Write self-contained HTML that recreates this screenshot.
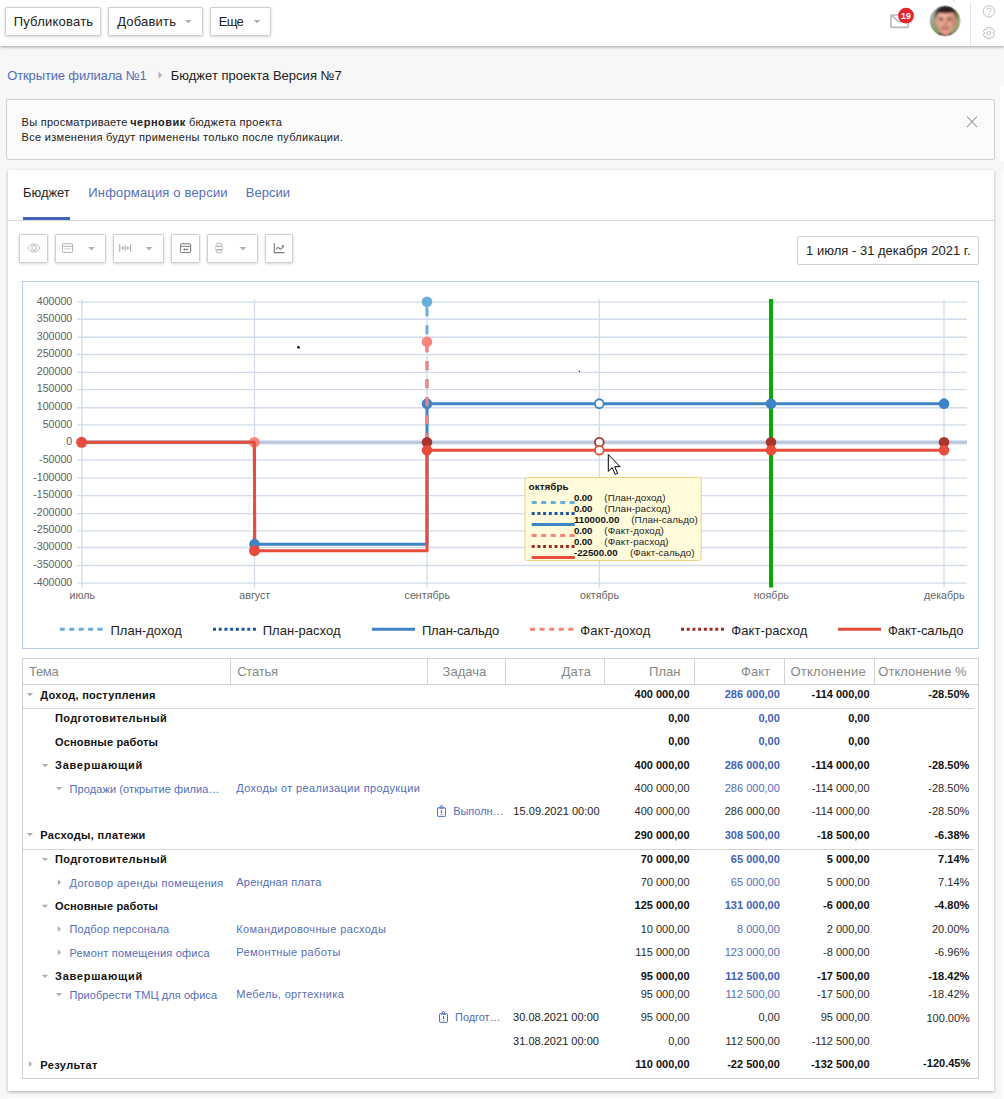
<!DOCTYPE html>
<html lang="ru"><head><meta charset="utf-8"><title>Бюджет проекта Версия №7</title>
<style>

html,body{margin:0;padding:0}
body{width:1004px;height:1099px;position:relative;overflow:hidden;background:#f7f7f7;font-family:"Liberation Sans",Arial,sans-serif;color:#222}
.a{position:absolute;box-sizing:border-box}
.t{position:absolute;white-space:nowrap;line-height:1em;display:block}
.btn{position:absolute;box-sizing:border-box;background:#fff;border:1px solid #cfcfcf;border-radius:1.5px;box-shadow:0 1px 3px rgba(0,0,0,.17)}
.hl{position:absolute;height:1px;background:#d4d4d4}
.vl{position:absolute;width:1px;background:#d4d4d4}
svg{position:absolute;overflow:visible}

</style></head><body>
<div class="a" style="left:0;top:0;width:1004px;height:46px;background:#fff;box-shadow:0 1px 3px rgba(0,0,0,.36)"></div>
<div class="btn" style="left:5px;top:7px;width:96px;height:29px"></div>
<div class="btn" style="left:108px;top:7px;width:95px;height:29px"></div>
<div class="btn" style="left:210px;top:7px;width:61px;height:29px"></div>
<div class="a" style="left:970px;top:2px;width:1px;height:44px;background:#e4e4e4"></div>
<div class="a" style="left:953px;top:0;width:1px;height:2px;background:#ddd"></div>
<div class="a" style="left:6px;top:99px;width:989px;height:61px;background:#fbfbfb;border:1px solid #d0d0d0;border-radius:2px"></div>
<div class="a" style="left:8px;top:170px;width:986px;height:921px;background:#fff;box-shadow:0 1px 3px rgba(0,0,0,.3)"></div>
<div class="a" style="left:1000px;top:86px;width:4px;height:74.5px;background:#fff"></div>
<div class="a" style="left:1001.8px;top:169px;width:2.2px;height:930px;background:#fdfdfd"></div>
<div class="a" style="left:8px;top:1097.6px;width:986px;height:2px;background:#fff"></div>
<div class="hl" style="left:8px;top:220px;width:986px;background:#d9d9d9"></div>
<div class="a" style="left:23px;top:217px;width:47px;height:3px;background:#3f63b5"></div>
<div class="btn" style="left:19px;top:234px;width:29px;height:29px"></div>
<div class="btn" style="left:55px;top:234px;width:51px;height:29px"></div>
<div class="btn" style="left:113px;top:234px;width:51px;height:29px"></div>
<div class="btn" style="left:171px;top:234px;width:29px;height:29px"></div>
<div class="btn" style="left:207px;top:234px;width:51px;height:29px"></div>
<div class="btn" style="left:265px;top:234px;width:28px;height:29px"></div>
<div class="a" style="left:797px;top:236px;width:182px;height:29px;background:#fff;border:1px solid #cfcfcf;border-radius:2px"></div>
<div class="a" style="left:22px;top:281px;width:957px;height:368px;background:#fff;border:1px solid #bdcde6"></div>
<div class="a" style="left:22px;top:658px;width:957px;height:421px;background:#fff;border:1px solid #d0d0d0"></div>
<div class="hl" style="left:22px;top:684px;width:957px;background:#d0d0d0"></div>
<div class="vl" style="left:230px;top:659px;height:25px"></div>
<div class="vl" style="left:427px;top:659px;height:25px"></div>
<div class="vl" style="left:505px;top:659px;height:25px"></div>
<div class="vl" style="left:604px;top:659px;height:25px"></div>
<div class="vl" style="left:694px;top:659px;height:25px"></div>
<div class="vl" style="left:784px;top:659px;height:25px"></div>
<div class="vl" style="left:874px;top:659px;height:25px"></div>
<div class="hl" style="left:23px;top:708px;width:951px"></div>
<div class="hl" style="left:23px;top:849px;width:951px"></div>
<svg width="1004" height="1099" viewBox="0 0 1004 1099" style="left:0;top:0" font-family="Liberation Sans,Arial,sans-serif">
<path d="M77 302.20H967" stroke="#d2dcec" stroke-width="1.300"/>
<text x="72.300" y="305" font-size="10.670" fill="#606060" text-anchor="end">400000</text>
<path d="M77 319.25H967" stroke="#d2dcec" stroke-width="1.300"/>
<text x="72.300" y="322" font-size="10.670" fill="#606060" text-anchor="end">350000</text>
<path d="M77 337.25H967" stroke="#d2dcec" stroke-width="1.300"/>
<text x="72.300" y="340" font-size="10.670" fill="#606060" text-anchor="end">300000</text>
<path d="M77 354.50H967" stroke="#d2dcec" stroke-width="1.300"/>
<text x="72.300" y="357" font-size="10.670" fill="#606060" text-anchor="end">250000</text>
<path d="M77 372.45H967" stroke="#d2dcec" stroke-width="1.300"/>
<text x="72.300" y="375" font-size="10.670" fill="#606060" text-anchor="end">200000</text>
<path d="M77 389.60H967" stroke="#d2dcec" stroke-width="1.300"/>
<text x="72.300" y="392" font-size="10.670" fill="#606060" text-anchor="end">150000</text>
<path d="M77 407.75H967" stroke="#d2dcec" stroke-width="1.300"/>
<text x="72.300" y="410" font-size="10.670" fill="#606060" text-anchor="end">100000</text>
<path d="M77 424.95H967" stroke="#d2dcec" stroke-width="1.300"/>
<text x="72.300" y="428" font-size="10.670" fill="#606060" text-anchor="end">50000</text>
<path d="M77 442.30H967" stroke="#d2dcec" stroke-width="1.300"/>
<text x="72.300" y="445" font-size="10.670" fill="#606060" text-anchor="end">0</text>
<path d="M77 460.10H967" stroke="#d2dcec" stroke-width="1.300"/>
<text x="72.300" y="463" font-size="10.670" fill="#606060" text-anchor="end">-50000</text>
<path d="M77 478.20H967" stroke="#d2dcec" stroke-width="1.300"/>
<text x="72.300" y="481" font-size="10.670" fill="#606060" text-anchor="end">-100000</text>
<path d="M77 495.60H967" stroke="#d2dcec" stroke-width="1.300"/>
<text x="72.300" y="498" font-size="10.670" fill="#606060" text-anchor="end">-150000</text>
<path d="M77 513.60H967" stroke="#d2dcec" stroke-width="1.300"/>
<text x="72.300" y="516" font-size="10.670" fill="#606060" text-anchor="end">-200000</text>
<path d="M77 530.90H967" stroke="#d2dcec" stroke-width="1.300"/>
<text x="72.300" y="533" font-size="10.670" fill="#606060" text-anchor="end">-250000</text>
<path d="M77 547.50H967" stroke="#d2dcec" stroke-width="1.300"/>
<text x="72.300" y="550" font-size="10.670" fill="#606060" text-anchor="end">-300000</text>
<path d="M77 565.50H967" stroke="#d2dcec" stroke-width="1.300"/>
<text x="72.300" y="568" font-size="10.670" fill="#606060" text-anchor="end">-350000</text>
<path d="M77 583.10H967" stroke="#d2dcec" stroke-width="1.300"/>
<text x="72.300" y="586" font-size="10.670" fill="#606060" text-anchor="end">-400000</text>
<path d="M82 299.300V587.500" stroke="#d2dcec" stroke-width="1.300"/>
<path d="M254.5 299.300V587.500" stroke="#d2dcec" stroke-width="1.300"/>
<path d="M427 299.300V587.500" stroke="#d2dcec" stroke-width="1.300"/>
<path d="M599.3 299.300V587.500" stroke="#d2dcec" stroke-width="1.300"/>
<path d="M771 299.300V587.500" stroke="#d2dcec" stroke-width="1.300"/>
<path d="M944 299.300V587.500" stroke="#d2dcec" stroke-width="1.300"/>
<path d="M77 442.3H967" stroke="#bccadf" stroke-width="3.800"/>
<text x="82.3" y="598.800" font-size="10.670" fill="#666" text-anchor="middle">июль</text>
<text x="254.8" y="598.800" font-size="10.670" fill="#666" text-anchor="middle">август</text>
<text x="427.3" y="598.800" font-size="10.670" fill="#666" text-anchor="middle">сентябрь</text>
<text x="599.5999999999999" y="598.800" font-size="10.670" fill="#666" text-anchor="middle">октябрь</text>
<text x="771.3" y="598.800" font-size="10.670" fill="#666" text-anchor="middle">ноябрь</text>
<text x="944.3" y="598.800" font-size="10.670" fill="#666" text-anchor="middle">декабрь</text>
<path d="M427 442.3V301.82" stroke="#6aaedc" stroke-width="3" stroke-dasharray="9 9" fill="none"/>
<path d="M82 442.3H254.400L254.600 544.15H427V403.67H944" stroke="#3d85c6" stroke-width="3" fill="none" stroke-linejoin="round"/>
<path d="M427 442.3V341.86" stroke="#fa8379" stroke-width="3" stroke-dasharray="9 9" fill="none"/>
<circle cx="254.400" cy="442.3" r="5.400" fill="#f8857b"/>
<path d="M82 442.3H254.300L254.800 550.65H427V450.20H944" stroke="#e74c3c" stroke-width="3" fill="none" stroke-linejoin="round"/>
<path d="M771 299V587.500" stroke="#06ab06" stroke-width="4"/>
<circle cx="427" cy="301.82" r="5.3" fill="#6aaedc"/>
<circle cx="254.5" cy="544.15" r="5.3" fill="#3d85c6"/>
<circle cx="427" cy="403.67" r="5.3" fill="#3d85c6"/>
<path d="M427 406.300V397.300" stroke="#fa8379" stroke-width="3" fill="none"/>
<circle cx="599.3" cy="403.67" r="4.400" fill="#fff" stroke="#3d85c6" stroke-width="1.800"/>
<circle cx="771" cy="403.67" r="5.3" fill="#3d85c6"/>
<circle cx="944" cy="403.67" r="5.3" fill="#3d85c6"/>
<circle cx="427" cy="341.86" r="5.3" fill="#fb867c"/>
<circle cx="427" cy="442.30" r="5.3" fill="#a9352d"/>
<circle cx="771" cy="442.30" r="5.3" fill="#a9352d"/>
<circle cx="944" cy="442.30" r="5.3" fill="#a9352d"/>
<circle cx="599.3" cy="442.30" r="4.400" fill="#fff" stroke="#a9352d" stroke-width="1.800"/>
<circle cx="81.6" cy="442.30" r="5.5" fill="#e74c3c"/>
<circle cx="254.5" cy="550.65" r="5.5" fill="#e74c3c"/>
<circle cx="427" cy="450.20" r="5.3" fill="#e74c3c"/>
<circle cx="771" cy="450.20" r="5.3" fill="#e74c3c"/>
<circle cx="944" cy="450.20" r="5.3" fill="#e74c3c"/>
<circle cx="599.3" cy="450.20" r="4.400" fill="#fff" stroke="#e74c3c" stroke-width="1.800"/>
<ellipse cx="298.500" cy="347.300" rx="1.600" ry="1.200" fill="#111" transform="rotate(35 298.500 347.300)"/>
<circle cx="579.300" cy="371.300" r=".7" fill="#222"/>
<path d="M59.800 629.3H103" stroke="#6aaedc" stroke-width="3" stroke-dasharray="5 4.450"/>
<path d="M213 629.3H256" stroke="#1d55a5" stroke-width="3" stroke-dasharray="3 2.710"/>
<path d="M372 629.3H415" stroke="#3d85c6" stroke-width="3"/>
<path d="M530 629.3H573.500" stroke="#fa8379" stroke-width="3" stroke-dasharray="5 4.600"/>
<path d="M681 629.3H724" stroke="#a02c25" stroke-width="3" stroke-dasharray="3 2.710"/>
<path d="M838 629.3H881" stroke="#e74c3c" stroke-width="3"/>
<rect x="525" y="477.500" width="176.200" height="83" rx="2.500" fill="#fffbdb" stroke="#f6cf7c" stroke-width="1"/>
<text x="528.600" y="490" font-size="9.900" font-weight="700" fill="#111" textLength="40" lengthAdjust="spacing">октябрь</text>
<path d="M531.700 502.40H574.800" stroke="#6aaedc" stroke-width="3" stroke-dasharray="5 4.500"/>
<text x="573.900" y="500.70" font-size="9.700" font-weight="700" fill="#111" textLength="18.5" lengthAdjust="spacing">0.00</text>
<text x="604.3000000000001" y="500.70" font-size="9.800" fill="#222" textLength="61.1" lengthAdjust="spacing">(План-доход)</text>
<path d="M531.700 513.42H574.800" stroke="#1d55a5" stroke-width="3" stroke-dasharray="3 2.700"/>
<text x="573.900" y="511.70" font-size="9.700" font-weight="700" fill="#111" textLength="18.5" lengthAdjust="spacing">0.00</text>
<text x="604.3000000000001" y="511.70" font-size="9.800" fill="#222" textLength="66.1" lengthAdjust="spacing">(План-расход)</text>
<path d="M531.700 524.44H574.800" stroke="#3d85c6" stroke-width="3"/>
<text x="573.900" y="522.70" font-size="9.700" font-weight="700" fill="#111" textLength="45.4" lengthAdjust="spacing">110000.00</text>
<text x="631.2" y="522.70" font-size="9.800" fill="#222" textLength="66.6" lengthAdjust="spacing">(План-сальдо)</text>
<path d="M531.700 535.46H574.800" stroke="#fa8379" stroke-width="3" stroke-dasharray="5 4.500"/>
<text x="573.900" y="533.70" font-size="9.700" font-weight="700" fill="#111" textLength="18.5" lengthAdjust="spacing">0.00</text>
<text x="604.3000000000001" y="533.70" font-size="9.800" fill="#222" textLength="59.4" lengthAdjust="spacing">(Факт-доход)</text>
<path d="M531.700 546.48H574.800" stroke="#a02c25" stroke-width="3" stroke-dasharray="3 2.700"/>
<text x="573.900" y="544.70" font-size="9.700" font-weight="700" fill="#111" textLength="18.5" lengthAdjust="spacing">0.00</text>
<text x="604.3000000000001" y="544.70" font-size="9.800" fill="#222" textLength="64.3" lengthAdjust="spacing">(Факт-расход)</text>
<path d="M531.700 557.50H574.800" stroke="#e74c3c" stroke-width="3"/>
<text x="573.900" y="555.70" font-size="9.700" font-weight="700" fill="#111" textLength="43.7" lengthAdjust="spacing">-22500.00</text>
<text x="629.9000000000001" y="555.70" font-size="9.800" fill="#222" textLength="64.6" lengthAdjust="spacing">(Факт-сальдо)</text>
<path d="M608.300 454.500v16.800l3.900-3.700 2.900 6.800 2.500-1.100-2.900-6.600h5.400z" fill="#fff" stroke="#000" stroke-width="1" stroke-linejoin="miter"/>
</svg>
<svg width="1004" height="1099" viewBox="0 0 1004 1099" style="left:0;top:0">
<path d="M185.0 19.9h6.4l-3.2 3.4z" fill="#aaa"/>
<path d="M253.8 19.9h6.4l-3.2 3.4z" fill="#aaa"/>
<path d="M158.5 71.8v7l3.6 -3.5z" fill="#b0b0b0"/>
<g fill="none" stroke="#b9b9b9" stroke-width="1.6" stroke-linejoin="round"><rect x="890.8" y="15" width="17.4" height="12.4" rx="0.8"/><path d="M891 15.4l8.5 6.4 8.5-6.4"/></g>
<circle cx="906" cy="15.6" r="7.9" fill="#e3262f"/>
<text x="906" y="18.700" font-size="8.800" font-weight="700" fill="#fff" text-anchor="middle" font-family="Liberation Sans,Arial,sans-serif">19</text>
<circle cx="988.900" cy="11.400" r="5.700" fill="none" stroke="#c2c2c2" stroke-width="1"/>
<path d="M987.2 9.9a1.9 1.9 0 1 1 2.6 1.8c-.6.3-.8.7-.8 1.4" fill="none" stroke="#bdbdbd" stroke-width="1"/><circle cx="989" cy="14.6" r=".6" fill="#bdbdbd"/>
<polygon points="987.19,29.26 987.18,27.46 990.62,27.46 990.61,29.26 991.37,29.70 992.92,28.79 994.65,31.77 993.08,32.66 993.08,33.54 994.65,34.43 992.92,37.41 991.37,36.50 990.61,36.94 990.62,38.74 987.18,38.74 987.19,36.94 986.43,36.50 984.88,37.41 983.15,34.43 984.72,33.54 984.72,32.66 983.15,31.77 984.88,28.79 986.43,29.70" fill="none" stroke="#c2c2c2" stroke-width="1" stroke-linejoin="round"/><circle cx="988.900" cy="33.100" r="1.900" fill="none" stroke="#c2c2c2" stroke-width="1"/>
<path d="M967 116.5l10 10.5M977 116.5l-10 10.5" stroke="#a9a9a9" stroke-width="1.1" fill="none"/>
<g fill="none" stroke="#b4b4b4" stroke-width="1"><path d="M28 248c1.6-2.6 3.6-4 6-4s4.400 1.400 6 4c-1.600 2.600-3.600 4-6 4s-4.400-1.400-6-4z"/><circle cx="34" cy="248" r="2.300"/></g>
<g fill="none" stroke="#b4b4b4" stroke-width="1"><rect x="62.5" y="243.700" width="10" height="8.800" rx=".8"/><path d="M62.500 246.300h10"/><path d="M64.700 248.800h1.400M66.900 248.800h1.400M69.100 248.800h1.400"/></g>
<path d="M88.1 247.0h6.8l-3.4 3.6z" fill="#b4b4b4"/>
<g fill="none" stroke="#b4b4b4" stroke-width="1"><path d="M119.600 244v8M130.600 244v8M122.400 246.200v3.800M125.100 245.400v5.400M127.800 246.200v3.800M119.600 248h11"/></g>
<path d="M145.6 247.0h6.8l-3.4 3.6z" fill="#b4b4b4"/>
<g fill="none" stroke="#7c7c7c" stroke-width="1"><rect x="180.500" y="243.800" width="10.200" height="8.800" rx=".8"/><path d="M180.500 246.300h10.200M183 242.900v1M188.200 242.900v1"/><path d="M184.900 248.300l-1.300 1.200 1.300 1.200M186.500 248.300l1.300 1.200-1.300 1.200M183.600 249.500h4.200" stroke-width=".9"/></g>
<g fill="none" stroke="#b4b4b4" stroke-width="1"><rect x="216.200" y="243.400" width="5.600" height="2.700" rx="1"/><rect x="215.500" y="246.600" width="7" height="3" rx="1"/><rect x="216.200" y="250.100" width="5.600" height="2.700" rx="1"/><path d="M217.200 246.100v.5M220.800 246.100v.5M217.200 249.600v.5M220.800 249.600v.5"/></g>
<path d="M239.6 247.0h6.8l-3.4 3.6z" fill="#b4b4b4"/>
<g fill="none" stroke="#7c7c7c" stroke-width="1.1"><path d="M274.300 243v9.600h10.200"/><path d="M276.200 249.600c1.300-2.600 2.300-2.600 3.300-1.200s2 1 3.700-2.400"/><path d="M281.700 245.600h1.800v1.800" stroke-width=".9"/></g>
<path d="M26.9 693.0h6.2l-3.1 3.2z" fill="#adadad"/>
<path d="M41.9 764.0h6.2l-3.1 3.2z" fill="#adadad"/>
<path d="M55.9 787.0h6.2l-3.1 3.2z" fill="#adadad"/>
<path d="M26.9 833.0h6.2l-3.1 3.2z" fill="#adadad"/>
<path d="M41.9 857.9h6.2l-3.1 3.2z" fill="#adadad"/>
<path d="M41.9 904.8h6.2l-3.1 3.2z" fill="#adadad"/>
<path d="M41.9 974.7h6.2l-3.1 3.2z" fill="#adadad"/>
<path d="M55.9 993.1h6.2l-3.1 3.2z" fill="#adadad"/>
<path d="M57.9 879.3v6l3.2 -3.0z" fill="#adadad"/>
<path d="M57.9 926.0v6l3.2 -3.0z" fill="#adadad"/>
<path d="M57.9 949.2v6l3.2 -3.0z" fill="#adadad"/>
<path d="M29.0 1061.0v6l3.2 -3.0z" fill="#adadad"/>
<g fill="none" stroke="#4a6abb" stroke-width="1"><rect x="437.55" y="807.75" width="7.900" height="8.600" rx=".6"/><path d="M440.30 807.70v-1a1.200 1.200 0 0 1 2.400 0v1" /><path d="M439.20 808.50h4.600" stroke-width=".9" opacity=".7"/><path d="M441.50 810.00v3.100M441.50 814.20v.9" stroke-width="1.150"/></g>
<g fill="none" stroke="#4a6abb" stroke-width="1"><rect x="439.55" y="1013.75" width="7.900" height="8.600" rx=".6"/><path d="M442.30 1013.70v-1a1.200 1.200 0 0 1 2.400 0v1" /><path d="M441.20 1014.50h4.600" stroke-width=".9" opacity=".7"/><path d="M443.50 1016.00v3.100M443.50 1020.20v.9" stroke-width="1.150"/></g>
</svg>
<svg width="32" height="32" viewBox="0 0 32 32" style="left:929px;top:5px">
<defs><clipPath id="avc"><circle cx="16" cy="15.900" r="15.300"/></clipPath>
<filter id="avb" x="-20%" y="-20%" width="140%" height="140%"><feGaussianBlur stdDeviation="1.050"/></filter>
<linearGradient id="avbg" x1="0" y1="0" x2="0.250" y2="1"><stop offset="0" stop-color="#bcc0c6"/><stop offset=".4" stop-color="#a9aa9c"/><stop offset=".75" stop-color="#8d9a6c"/><stop offset="1" stop-color="#7b9556"/></linearGradient></defs>
<g clip-path="url(#avc)"><rect width="32" height="32" fill="url(#avbg)"/>
<g filter="url(#avb)">
<rect x="23" y="4" width="10" height="28" fill="#8e9a62"/>
<rect x="26" y="14" width="6" height="10" fill="#a3a574"/>
<path d="M7 32c1-3 4-4.500 9.500-4.500s8 1.500 9 4.500z" fill="#3b3231"/>
<rect x="12.500" y="24" width="8" height="6" fill="#c98672"/>
<ellipse cx="7.400" cy="17.200" rx="1.300" ry="2.200" fill="#d6907c"/><ellipse cx="26.300" cy="17.400" rx="1.200" ry="2.200" fill="#b8745f"/>
<path d="M7.600 12.500c0-5 3.500-7.500 9-7.500s9.600 2.500 9.600 7.500c0 4.500-.6 8-2.400 11.500-1.600 3.200-4.400 5.400-7.200 5.400s-5.200-2.200-6.800-5.400c-1.700-3.500-2.200-7-2.200-11.500z" fill="#e6a18b"/>
<ellipse cx="14.800" cy="10.300" rx="4.600" ry="2.600" fill="#f1b39d"/>
<path d="M22.500 9c2.500 2.500 3.600 7 1.600 14-1 .6-1.800-7-1.600-14z" fill="#bd7865" opacity=".8"/>
<path d="M6.500 15.500c-1.600-9.500 3-14.800 10.300-14.800s12.400 5.300 10.300 14.900c-.4-3.600-1.300-6.600-3.300-8-3.700 1-9.800 1-13.600-.2-2.100 1.500-3.200 4.300-3.700 8.100z" fill="#2a2321"/>
<path d="M9.700 13.300c1.400-.8 3.200-.8 4.600-.2M18 13.100c1.500-.6 3.200-.5 4.500.3" stroke="#4a2e26" stroke-width=".9" fill="none"/>
<ellipse cx="12" cy="14.900" rx="1.700" ry=".8" fill="#3f261f"/><ellipse cx="20" cy="14.900" rx="1.700" ry=".8" fill="#3f261f"/>
<path d="M16.800 16.500c.5 1.600 1 2.800.4 3.800-.8.400-1.800.3-2.400-.1" fill="none" stroke="#a8624f" stroke-width="1.100"/>
<path d="M11.800 22.300c2.600 1 6.200 1 8.900-.1-1 3.200-7.600 3.300-8.900.1z" fill="#e9c9c0" stroke="#8d4a45" stroke-width=".9"/>
</g></g>
<circle cx="16" cy="15.900" r="15.300" fill="none" stroke="#e9eaee" stroke-width=".6"/></svg>
<span class="t" style="left:13.70px;top:15.00px;font-size:13px;letter-spacing:0.220px;">Публиковать</span>
<span class="t" style="left:117.20px;top:15.00px;font-size:13px;letter-spacing:0.192px;">Добавить</span>
<span class="t" style="left:218.70px;top:15.00px;font-size:13px;letter-spacing:-0.727px;">Еще</span>
<span class="t" style="left:7.30px;top:69.00px;font-size:13px;color:#546eb8;letter-spacing:-0.146px;">Открытие филиала №1</span>
<span class="t" style="left:170.70px;top:69.00px;font-size:13px;letter-spacing:0.023px;">Бюджет проекта Версия №7</span>
<span class="t" style="left:21.60px;top:117.00px;font-size:11px;letter-spacing:0.278px;">Вы просматриваете</span>
<span class="t" style="left:130.20px;top:117.00px;font-size:11px;font-weight:700;letter-spacing:0.496px;">черновик</span>
<span class="t" style="left:188.90px;top:117.00px;font-size:11px;letter-spacing:0.334px;">бюджета проекта</span>
<span class="t" style="left:21.60px;top:132.00px;font-size:11px;letter-spacing:0.294px;">Все изменения будут применены только после публикации.</span>
<span class="t" style="left:23.00px;top:186.00px;font-size:13px;letter-spacing:-0.046px;">Бюджет</span>
<span class="t" style="left:88.30px;top:186.00px;font-size:13px;color:#546eb8;letter-spacing:0.167px;">Информация о версии</span>
<span class="t" style="left:245.70px;top:186.00px;font-size:13px;color:#546eb8;letter-spacing:0.029px;">Версии</span>
<span class="t" style="left:806.10px;top:244.00px;font-size:13px;letter-spacing:0.007px;">1 июля - 31 декабря 2021 г.</span>
<span class="t" style="left:110.50px;top:624.00px;font-size:13px;letter-spacing:0.007px;">План-доход</span>
<span class="t" style="left:262.70px;top:624.00px;font-size:13px;letter-spacing:0.028px;">План-расход</span>
<span class="t" style="left:421.90px;top:624.00px;font-size:13px;letter-spacing:-0.118px;">План-сальдо</span>
<span class="t" style="left:580.30px;top:624.00px;font-size:13px;letter-spacing:0.134px;">Факт-доход</span>
<span class="t" style="left:731.20px;top:624.00px;font-size:13px;letter-spacing:0.102px;">Факт-расход</span>
<span class="t" style="left:888.00px;top:624.00px;font-size:13px;letter-spacing:-0.064px;">Факт-сальдо</span>
<span class="t" style="left:29.00px;top:665.00px;font-size:13px;color:#888;letter-spacing:-0.303px;">Тема</span>
<span class="t" style="left:237.20px;top:665.00px;font-size:13px;color:#888;letter-spacing:-0.204px;">Статья</span>
<span class="t" style="left:442.60px;top:665.00px;font-size:13px;color:#888;letter-spacing:0.015px;">Задача</span>
<span class="t" style="left:561.60px;top:665.00px;font-size:13px;color:#888;letter-spacing:0.168px;">Дата</span>
<span class="t" style="left:649.00px;top:665.00px;font-size:13px;color:#888;letter-spacing:0.052px;">План</span>
<span class="t" style="left:741.10px;top:665.00px;font-size:13px;color:#888;letter-spacing:0.031px;">Факт</span>
<span class="t" style="left:790.40px;top:665.00px;font-size:13px;color:#888;letter-spacing:0.272px;">Отклонение</span>
<span class="t" style="left:878.30px;top:665.00px;font-size:13px;color:#888;letter-spacing:0.016px;">Отклонение %</span>
<span class="t" style="left:40.30px;top:690.00px;font-size:11px;font-weight:700;color:#111;letter-spacing:0.277px;">Доход, поступления</span>
<span class="t" style="left:55.00px;top:713.00px;font-size:11px;font-weight:700;color:#111;letter-spacing:0.387px;">Подготовительный</span>
<span class="t" style="left:55.00px;top:737.00px;font-size:11px;font-weight:700;color:#111;letter-spacing:0.152px;">Основные работы</span>
<span class="t" style="left:55.00px;top:760.00px;font-size:11px;font-weight:700;color:#111;letter-spacing:0.735px;">Завершающий</span>
<span class="t" style="left:69.50px;top:784.00px;font-size:11px;color:#546eb8;letter-spacing:0.103px;">Продажи (открытие филиа…</span>
<span class="t" style="left:40.30px;top:830.00px;font-size:11px;font-weight:700;color:#111;letter-spacing:0.343px;">Расходы, платежи</span>
<span class="t" style="left:55.00px;top:854.00px;font-size:11px;font-weight:700;color:#111;letter-spacing:0.387px;">Подготовительный</span>
<span class="t" style="left:69.50px;top:878.00px;font-size:11px;color:#546eb8;letter-spacing:0.366px;">Договор аренды помещения</span>
<span class="t" style="left:55.00px;top:901.00px;font-size:11px;font-weight:700;color:#111;letter-spacing:0.152px;">Основные работы</span>
<span class="t" style="left:69.50px;top:924.00px;font-size:11px;color:#546eb8;letter-spacing:0.215px;">Подбор персонала</span>
<span class="t" style="left:69.50px;top:948.00px;font-size:11px;color:#546eb8;letter-spacing:0.201px;">Ремонт помещения офиса</span>
<span class="t" style="left:55.00px;top:971.00px;font-size:11px;font-weight:700;color:#111;letter-spacing:0.735px;">Завершающий</span>
<span class="t" style="left:69.50px;top:990.00px;font-size:11px;color:#546eb8;letter-spacing:0.047px;">Приобрести ТМЦ для офиса</span>
<span class="t" style="left:40.30px;top:1060.00px;font-size:11px;font-weight:700;color:#111;letter-spacing:0.396px;">Результат</span>
<span class="t" style="left:236.30px;top:783.00px;font-size:11px;color:#546eb8;letter-spacing:0.356px;">Доходы от реализации продукции</span>
<span class="t" style="left:236.30px;top:877.00px;font-size:11px;color:#546eb8;letter-spacing:0.188px;">Арендная плата</span>
<span class="t" style="left:236.30px;top:924.00px;font-size:11px;color:#546eb8;letter-spacing:0.392px;">Командировочные расходы</span>
<span class="t" style="left:236.30px;top:947.00px;font-size:11px;color:#546eb8;letter-spacing:0.381px;">Ремонтные работы</span>
<span class="t" style="left:236.30px;top:989.00px;font-size:11px;color:#546eb8;letter-spacing:0.358px;">Мебель, оргтехника</span>
<span class="t" style="left:453.20px;top:806.00px;font-size:11px;color:#546eb8;letter-spacing:-0.030px;">Выполн…</span>
<span class="t" style="left:513.30px;top:806.00px;font-size:11px;letter-spacing:0.044px;">15.09.2021 00:00</span>
<span class="t" style="left:455.10px;top:1012.00px;font-size:11px;color:#546eb8;letter-spacing:-0.082px;">Подгот…</span>
<span class="t" style="left:513.10px;top:1012.00px;font-size:11px;letter-spacing:0.011px;">30.08.2021 00:00</span>
<span class="t" style="left:513.10px;top:1036.00px;font-size:11px;letter-spacing:0.011px;">31.08.2021 00:00</span>
<span class="t" style="left:634.54px;top:689.00px;font-size:11px;font-weight:700;color:#111;">400 000,00</span>
<span class="t" style="left:724.74px;top:689.00px;font-size:11px;font-weight:700;color:#3f63b8;">286 000,00</span>
<span class="t" style="left:811.47px;top:689.00px;font-size:11px;font-weight:700;color:#111;">-114 000,00</span>
<span class="t" style="left:928.32px;top:689.00px;font-size:11px;font-weight:700;color:#111;">-28.50%</span>
<span class="t" style="left:668.18px;top:713.00px;font-size:11px;font-weight:700;color:#111;">0,00</span>
<span class="t" style="left:758.38px;top:713.00px;font-size:11px;font-weight:700;color:#3f63b8;">0,00</span>
<span class="t" style="left:848.18px;top:713.00px;font-size:11px;font-weight:700;color:#111;">0,00</span>
<span class="t" style="left:668.18px;top:736.00px;font-size:11px;font-weight:700;color:#111;">0,00</span>
<span class="t" style="left:758.38px;top:736.00px;font-size:11px;font-weight:700;color:#3f63b8;">0,00</span>
<span class="t" style="left:848.18px;top:736.00px;font-size:11px;font-weight:700;color:#111;">0,00</span>
<span class="t" style="left:634.54px;top:760.00px;font-size:11px;font-weight:700;color:#111;">400 000,00</span>
<span class="t" style="left:724.74px;top:760.00px;font-size:11px;font-weight:700;color:#3f63b8;">286 000,00</span>
<span class="t" style="left:811.47px;top:760.00px;font-size:11px;font-weight:700;color:#111;">-114 000,00</span>
<span class="t" style="left:928.32px;top:760.00px;font-size:11px;font-weight:700;color:#111;">-28.50%</span>
<span class="t" style="left:634.54px;top:783.00px;font-size:11px;color:#2a2a2a;">400 000,00</span>
<span class="t" style="left:724.74px;top:783.00px;font-size:11px;color:#546eb8;">286 000,00</span>
<span class="t" style="left:811.69px;top:783.00px;font-size:11px;color:#2a2a2a;">-114 000,00</span>
<span class="t" style="left:928.32px;top:783.00px;font-size:11px;color:#2a2a2a;">-28.50%</span>
<span class="t" style="left:634.54px;top:806.00px;font-size:11px;color:#2a2a2a;">400 000,00</span>
<span class="t" style="left:724.74px;top:806.00px;font-size:11px;color:#2a2a2a;">286 000,00</span>
<span class="t" style="left:811.69px;top:806.00px;font-size:11px;color:#2a2a2a;">-114 000,00</span>
<span class="t" style="left:928.32px;top:806.00px;font-size:11px;color:#2a2a2a;">-28.50%</span>
<span class="t" style="left:634.54px;top:830.00px;font-size:11px;font-weight:700;color:#111;">290 000,00</span>
<span class="t" style="left:724.74px;top:830.00px;font-size:11px;font-weight:700;color:#3f63b8;">308 500,00</span>
<span class="t" style="left:816.99px;top:830.00px;font-size:11px;font-weight:700;color:#111;">-18 500,00</span>
<span class="t" style="left:934.44px;top:830.00px;font-size:11px;font-weight:700;color:#111;">-6.38%</span>
<span class="t" style="left:640.66px;top:854.00px;font-size:11px;font-weight:700;color:#111;">70 000,00</span>
<span class="t" style="left:730.86px;top:854.00px;font-size:11px;font-weight:700;color:#3f63b8;">65 000,00</span>
<span class="t" style="left:826.77px;top:854.00px;font-size:11px;font-weight:700;color:#111;">5 000,00</span>
<span class="t" style="left:938.10px;top:854.00px;font-size:11px;font-weight:700;color:#111;">7.14%</span>
<span class="t" style="left:640.66px;top:877.00px;font-size:11px;color:#2a2a2a;">70 000,00</span>
<span class="t" style="left:730.86px;top:877.00px;font-size:11px;color:#546eb8;">65 000,00</span>
<span class="t" style="left:826.77px;top:877.00px;font-size:11px;color:#2a2a2a;">5 000,00</span>
<span class="t" style="left:938.10px;top:877.00px;font-size:11px;color:#2a2a2a;">7.14%</span>
<span class="t" style="left:634.54px;top:900.00px;font-size:11px;font-weight:700;color:#111;">125 000,00</span>
<span class="t" style="left:724.74px;top:900.00px;font-size:11px;font-weight:700;color:#3f63b8;">131 000,00</span>
<span class="t" style="left:823.12px;top:900.00px;font-size:11px;font-weight:700;color:#111;">-6 000,00</span>
<span class="t" style="left:934.44px;top:900.00px;font-size:11px;font-weight:700;color:#111;">-4.80%</span>
<span class="t" style="left:640.66px;top:924.00px;font-size:11px;color:#2a2a2a;">10 000,00</span>
<span class="t" style="left:736.97px;top:924.00px;font-size:11px;color:#546eb8;">8 000,00</span>
<span class="t" style="left:826.77px;top:924.00px;font-size:11px;color:#2a2a2a;">2 000,00</span>
<span class="t" style="left:931.99px;top:924.00px;font-size:11px;color:#2a2a2a;">20.00%</span>
<span class="t" style="left:635.35px;top:947.00px;font-size:11px;color:#2a2a2a;">115 000,00</span>
<span class="t" style="left:724.74px;top:947.00px;font-size:11px;color:#546eb8;">123 000,00</span>
<span class="t" style="left:823.12px;top:947.00px;font-size:11px;color:#2a2a2a;">-8 000,00</span>
<span class="t" style="left:934.44px;top:947.00px;font-size:11px;color:#2a2a2a;">-6.96%</span>
<span class="t" style="left:640.66px;top:971.00px;font-size:11px;font-weight:700;color:#111;">95 000,00</span>
<span class="t" style="left:725.35px;top:971.00px;font-size:11px;font-weight:700;color:#3f63b8;">112 500,00</span>
<span class="t" style="left:816.99px;top:971.00px;font-size:11px;font-weight:700;color:#111;">-17 500,00</span>
<span class="t" style="left:928.32px;top:971.00px;font-size:11px;font-weight:700;color:#111;">-18.42%</span>
<span class="t" style="left:640.66px;top:989.00px;font-size:11px;color:#2a2a2a;">95 000,00</span>
<span class="t" style="left:725.55px;top:989.00px;font-size:11px;color:#546eb8;">112 500,00</span>
<span class="t" style="left:816.99px;top:989.00px;font-size:11px;color:#2a2a2a;">-17 500,00</span>
<span class="t" style="left:928.32px;top:989.00px;font-size:11px;color:#2a2a2a;">-18.42%</span>
<span class="t" style="left:640.66px;top:1012.00px;font-size:11px;color:#2a2a2a;">95 000,00</span>
<span class="t" style="left:758.38px;top:1012.00px;font-size:11px;color:#2a2a2a;">0,00</span>
<span class="t" style="left:820.66px;top:1012.00px;font-size:11px;color:#2a2a2a;">95 000,00</span>
<span class="t" style="left:926.46px;top:1013.00px;font-size:11px;color:#2a2a2a;">100.00%</span>
<span class="t" style="left:668.18px;top:1036.00px;font-size:11px;color:#2a2a2a;">0,00</span>
<span class="t" style="left:725.55px;top:1036.00px;font-size:11px;color:#2a2a2a;">112 500,00</span>
<span class="t" style="left:811.69px;top:1036.00px;font-size:11px;color:#2a2a2a;">-112 500,00</span>
<span class="t" style="left:635.15px;top:1059.00px;font-size:11px;font-weight:700;color:#111;">110 000,00</span>
<span class="t" style="left:727.19px;top:1059.00px;font-size:11px;font-weight:700;color:#111;">-22 500,00</span>
<span class="t" style="left:810.88px;top:1059.00px;font-size:11px;font-weight:700;color:#111;">-132 500,00</span>
<span class="t" style="left:923.11px;top:1058.00px;font-size:11px;font-weight:700;color:#111;">-120.45%</span>

</body></html>
